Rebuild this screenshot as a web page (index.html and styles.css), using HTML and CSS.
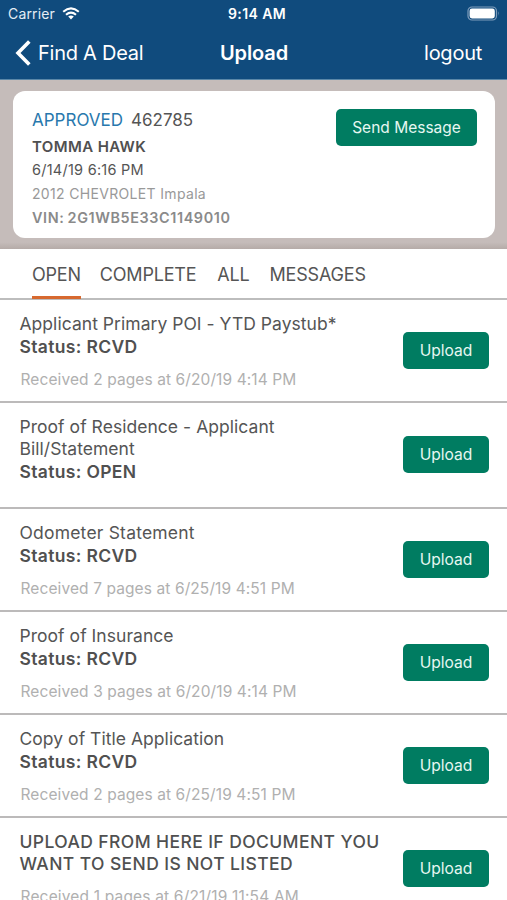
FILE: index.html
```html
<!DOCTYPE html>
<html lang="en">
<head>
<meta charset="utf-8">
<title>Upload</title>
<link rel="stylesheet" href="styles.css">
</head>
<body>
<header class="header">
  <div class="statusbar">
    <div class="carrier"><span>Carrier</span>
      <svg class="wifi" width="18" height="13" viewBox="0 0 18 13" fill="none" stroke="#fff" stroke-width="2.1"><path d="M1.2 4.7Q9-1.9 16.8 4.7"/><path d="M4 7.8Q9 3.6 14 7.8"/><path d="M9 12.4L6.2 9.6Q9 7.4 11.8 9.6Z" fill="#fff" stroke="none"/></svg>
    </div>
    <div class="clock">9:14 AM</div>
    <svg class="battery" width="33" height="15" viewBox="0 0 33 15"><rect x="1" y="1" width="28.5" height="13" rx="4" fill="none" stroke="#7f9dbb" stroke-width="1.2"/><rect x="2.6" y="2.6" width="25.2" height="9.8" rx="2.4" fill="#fff"/><path d="M31 5.3q1.6 2.2 0 4.4z" fill="#7f9dbb"/></svg>
  </div>
  <nav class="navbar">
    <a class="back"><svg width="16" height="26" viewBox="0 0 16 26" fill="none" stroke="#fff" stroke-width="3.6"><path d="M14.3 1.5L3 13L14.3 24.5"/></svg><span>Find A Deal</span></a>
    <h1 class="title">Upload</h1>
    <a class="logout">logout</a>
  </nav>
</header>
<section class="summary">
  <div class="card">
    <div class="details">
      <p class="deal"><span class="approved">APPROVED</span><span class="number">462785</span></p>
      <p class="name">TOMMA HAWK</p>
      <p class="date">6/14/19 6:16 PM</p>
      <p class="car">2012 CHEVROLET Impala</p>
      <p class="vin">VIN: 2G1WB5E33C1149010</p>
    </div>
    <button class="btn send">Send Message</button>
  </div>
</section>
<nav class="tabs">
  <a class="tab active">OPEN</a><a class="tab">COMPLETE</a><a class="tab all">ALL</a><a class="tab">MESSAGES</a>
</nav>
<main>
  <article class="row"><div class="info"><h2>Applicant Primary POI - YTD Paystub*</h2><p class="status">Status: RCVD</p><p class="received">Received 2 pages at 6/20/19 4:14 PM</p></div><button class="btn">Upload</button></article>
  <article class="row tall"><div class="info"><h2>Proof of Residence - Applicant<br>Bill/Statement</h2><p class="status">Status: OPEN</p></div><button class="btn">Upload</button></article>
  <article class="row"><div class="info"><h2 class="wide">Odometer Statement</h2><p class="status">Status: RCVD</p><p class="received">Received 7 pages at 6/25/19 4:51 PM</p></div><button class="btn">Upload</button></article>
  <article class="row"><div class="info"><h2>Proof of Insurance</h2><p class="status">Status: RCVD</p><p class="received">Received 3 pages at 6/20/19 4:14 PM</p></div><button class="btn">Upload</button></article>
  <article class="row"><div class="info"><h2>Copy of Title Application</h2><p class="status">Status: RCVD</p><p class="received">Received 2 pages at 6/25/19 4:51 PM</p></div><button class="btn">Upload</button></article>
  <article class="row"><div class="info"><h2 class="strong">UPLOAD FROM HERE IF DOCUMENT YOU<br>WANT TO SEND IS NOT LISTED</h2><p class="received last">Received 1 pages at 6/21/19 11:54 AM</p></div><button class="btn">Upload</button></article>
</main>
</body>
</html>
```
FILE: styles.css
```css
* { box-sizing: border-box; }
body {
  margin: 0;
  height: 900px;
  overflow: hidden;
  background: #fff;
  color: #555;
  font-family: Inter, "Liberation Sans", sans-serif;
}
h1, h2, p { margin: 0; font-weight: 400; }
p, h2, span, a { white-space: nowrap; }
svg { display: block; flex: none; }

.header { height: 80px; background: #104b7d; color: #fff; border-bottom: 1px solid #5a87a8; }
.statusbar { display: grid; grid-template-columns: 1fr auto 1fr; align-items: center; height: 27px; padding: 0 7px 0 8px; font-size: 14px; }
.carrier { display: flex; align-items: center; gap: 7px; letter-spacing: .15px; color: #e4edf5; }
.clock { padding-left: 6px; font-weight: 600; letter-spacing: .4px; }
.battery { justify-self: end; }
.navbar { display: grid; grid-template-columns: 1fr auto 1fr; align-items: center; height: 51px; padding: 0 25px 0 15px; font-size: 20px; letter-spacing: -.25px; }
.back { display: flex; align-items: center; gap: 7px; }
.title { padding-left: 11px; font-size: 20px; font-weight: 600; letter-spacing: -.1px; }
.logout { justify-self: end; }

.summary { height: 169px; padding: 11px 12px 0 13px; background: linear-gradient(#c5bcba 96%, #b5aba8); }
.card { display: flex; justify-content: space-between; height: 147px; padding: 18px 18px 0 19px; background: #fff; border-radius: 12px; }
.deal { display: flex; gap: 8px; height: 23px; font-size: 17px; line-height: 23px; }
.approved { color: #2878ad; }
.name, .date, .car, .vin { height: 24px; line-height: 26px; }
.name { height: 25px; line-height: 29px; font-size: 15px; font-weight: 600; letter-spacing: .4px; color: #505050; }
.date { font-size: 14.5px; letter-spacing: .25px; }
.car { font-size: 14px; letter-spacing: .33px; color: #999; }
.vin { font-size: 14.4px; font-weight: 600; letter-spacing: .6px; word-spacing: -1px; color: #8a8a8a; }
.btn { flex: none; width: 86px; height: 37px; padding: 0; border: 0; border-radius: 5px; background: #007c61; color: #e6f7f1; font: 400 15.6px/37px Inter, "Liberation Sans", sans-serif; }
.send { width: 141px; font-size: 15.5px; }

.tabs { display: flex; gap: 19px; height: 51px; padding-left: 32px; border-bottom: 2px solid #bdbdbd; font-size: 18px; line-height: 51px; letter-spacing: -.2px; }
.tab { height: 50px; }
.all { margin: 0 1px 0 2px; }
.active { border-bottom: 3px solid #d7692f; }

.row { display: flex; justify-content: space-between; height: 103px; padding: 13px 18px 0 19.5px; border-bottom: 2px solid #bcbaba; }
.tall { height: 106px; }
.row .btn { margin-top: 19px; }
.tall .btn { margin-top: 20px; }
h2 { font-size: 17.5px; line-height: 22px; letter-spacing: .04px; }
.wide { letter-spacing: .2px; }
.status { font-size: 17.5px; line-height: 24px; font-weight: 600; letter-spacing: .34px; color: #505050; }
.received { margin: 9.5px 0 0 1px; font-size: 15.5px; line-height: 22px; letter-spacing: .1px; color: #b0b0b0; }
.last { margin-top: 11px; letter-spacing: .17px; }
.strong { font-weight: 500; letter-spacing: .4px; color: #505050; }
```
